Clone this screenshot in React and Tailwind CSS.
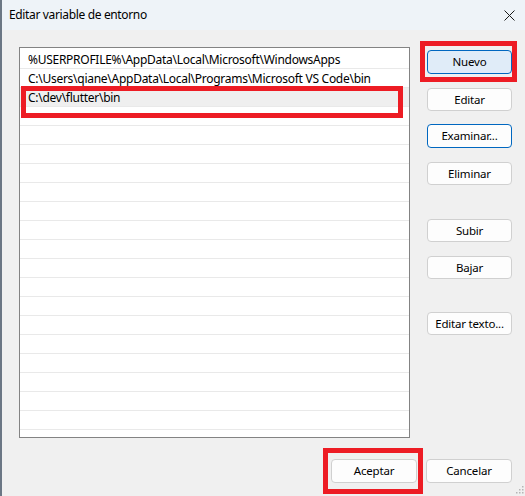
import React from 'react';

const rows = [
    '%USERPROFILE%\\AppData\\Local\\Microsoft\\WindowsApps',
    'C:\\Users\\qiane\\AppData\\Local\\Programs\\Microsoft VS Code\\bin',
    'C:\\dev\\flutter\\bin',
];

function Btn({ children, primary, focused, className = '' }) {
    let look = 'border-[#d0d0d0] bg-[#fdfdfd]';
    if (primary) look = 'border-[#0067c0] bg-[#e0ecf8]';
    else if (focused) look = 'border-[#0067c0] bg-[#fdfdfd]';
    return (
        <button className={`w-[85px] h-[23px] rounded-[4px] border text-[11.5px] tracking-[-0.2px] text-black flex items-center justify-center ${look} ${className}`}>
            {children}
        </button>
    );
}

export default function App() {
    const filler = Array.from({ length: 21 }, (_, i) => rows[i] || '');

    return (
        <div className="relative w-[525px] h-[496px] flex bg-[#f0f0f0] overflow-hidden" style={{ fontFamily: '"Noto Sans", "Open Sans", sans-serif' }}>
            <div className="w-[2px] h-full bg-[#6b7785]" />

            <div className="flex-1 flex flex-col">
                {/* title bar */}
                <div className="h-[30px] bg-[#eef3f8] flex items-center justify-between pl-[7px] pr-[9px]">
                    <span className="text-[12px] tracking-[-0.35px] text-black">Editar variable de entorno</span>
                    <svg width="11" height="11" viewBox="0 0 11 11" className="mr-[1px]">
                        <path d="M0.5 0.5 L10.5 10.5 M10.5 0.5 L0.5 10.5" stroke="#1a1a1a" strokeWidth="1" />
                    </svg>
                </div>

                {/* body */}
                <div className="flex-1 flex flex-col">
                    <div className="flex">
                        <div className="ml-[17px] mt-[17px] w-[391px] h-[391px] border border-[#838383] bg-white pt-[2px] overflow-hidden">
                            {filler.map((r, i) => (
                                <div
                                    key={i}
                                    className={`h-[19px] border-b border-[#e9e9e9] px-[8px] text-[12px] tracking-[-0.27px] leading-[20px] text-black whitespace-nowrap ${i === 2 ? 'bg-[#efefef]' : ''}`}
                                >
                                    {r}
                                </div>
                            ))}
                        </div>

                        <div className="ml-[17px] mt-[20px] flex flex-col">
                            <Btn primary className="h-[24px]">Nuevo</Btn>
                            <Btn className="mt-[14px]">Editar</Btn>
                            <Btn focused className="mt-[13px] h-[24px]">Examinar...</Btn>
                            <Btn className="mt-[14px]">Eliminar</Btn>
                            <Btn className="mt-[34px]">Subir</Btn>
                            <Btn className="mt-[14px]">Bajar</Btn>
                            <Btn className="mt-[33px]">Editar texto...</Btn>
                        </div>
                    </div>

                    <div className="mt-[21px] flex justify-end gap-[9px] pr-[13px]">
                        <Btn className="w-[86px] h-[24px]">Aceptar</Btn>
                        <Btn className="w-[86px] h-[24px]">Cancelar</Btn>
                    </div>
                </div>
            </div>

            {/* resize grip */}
            <svg width="8" height="8" viewBox="0 0 8 8" className="absolute right-[1px] bottom-[2px]">
                <rect x="6" y="0" width="1.5" height="1.5" fill="#b5b5b5" />
                <rect x="3" y="3" width="1.5" height="1.5" fill="#b5b5b5" />
                <rect x="6" y="3" width="1.5" height="1.5" fill="#b5b5b5" />
                <rect x="0" y="6" width="1.5" height="1.5" fill="#b5b5b5" />
                <rect x="3" y="6" width="1.5" height="1.5" fill="#b5b5b5" />
                <rect x="6" y="6" width="1.5" height="1.5" fill="#b5b5b5" />
            </svg>

            {/* red annotation boxes */}
            <div className="absolute left-[21px] top-[86px] w-[382px] h-[32px] border-[5px] border-[#ed1c24]" />
            <div className="absolute left-[420px] top-[41px] w-[97px] h-[41px] border-[5px] border-[#ed1c24]" />
            <div className="absolute left-[323px] top-[448px] w-[100px] h-[46px] border-[5px] border-[#ed1c24]" />
        </div>
    );
}
